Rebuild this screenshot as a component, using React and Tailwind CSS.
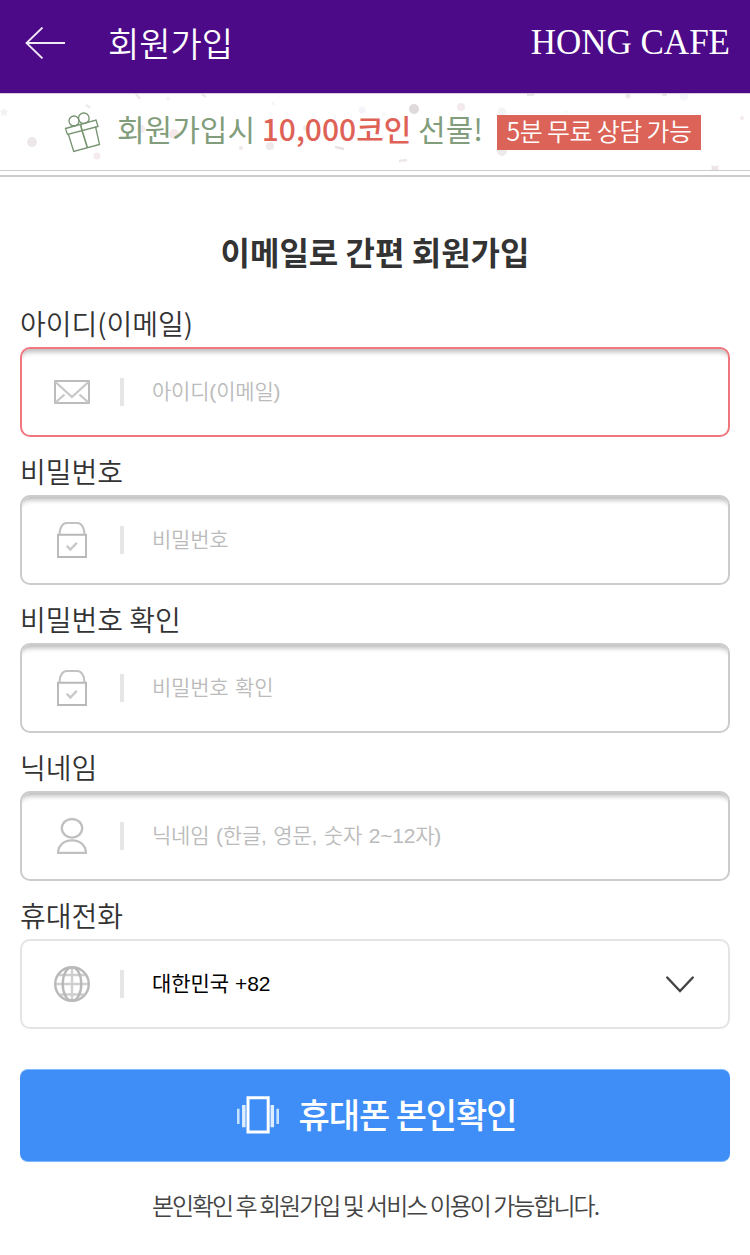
import { useState } from 'react'

const confetti = [
  { x: 32, y: 142, r: 5, fill: '#eee7e8' },
  { x: 97, y: 156, r: 3.5, fill: '#f5ebec' },
  { x: 168, y: 98.5, r: 2, fill: '#f5f3f6' },
  { x: 141, y: 129, r: 4, fill: '#f4ebed' },
  { x: 174, y: 134, r: 5, fill: '#f4e8ea' },
  { x: 241, y: 148, r: 2, fill: '#eee7e9' },
  { x: 270, y: 146, r: 4, fill: '#efe9ea' },
  { x: 362, y: 110, r: 3.5, fill: '#f4f4fa' },
  { x: 306, y: 128, r: 3, fill: '#f0ecee' },
  { x: 414, y: 109, r: 5, fill: '#dfd9db' },
  { x: 461, y: 107, r: 4, fill: '#f3eaed' },
  { x: 384, y: 114, r: 2, fill: '#f8f7f9' },
  { x: 502, y: 112, r: 4.5, fill: '#f4f4f7' },
  { x: 502, y: 151, r: 5, fill: '#eeeaec' },
  { x: 566, y: 112, r: 1.5, fill: '#f5f5fa' },
  { x: 628, y: 96, r: 2.5, fill: '#efe7e7' },
  { x: 684, y: 96, r: 4.5, fill: '#f5f6fb' },
  { x: 742, y: 118, r: 2, fill: '#f3ebed' },
]

function Confetti() {
  return (
    <svg className="absolute inset-0" width="750" height="76" viewBox="0 94 750 76">
      {confetti.map((c) => (
        <circle key={`${c.x}-${c.y}`} cx={c.x} cy={c.y} r={c.r} fill={c.fill} />
      ))}
      <path d="M4 107.500l1.300 3 3.200.300-2.400 2.100.700 3.200-2.800-1.700-2.800 1.700.700-3.200-2.400-2.100 3.200-.300z" fill="#f3f1f3" />
      <path d="M711 165l4 1.500 4-1.500-1 3 1 3h-8l1-3z" fill="#eee4e6" />
      <g fill="none" strokeWidth="2.500">
        <path d="M136 94l4 5M86 105l4 2.500M202 94l4 3" stroke="#f0e8ea" />
        <path d="M272 102l2 3" stroke="#f4f1f3" strokeWidth="1.500" />
        <path d="M335 147l9 2" stroke="#e9e1e3" />
        <path d="M399 161l8-1" stroke="#ede6e9" />
        <path d="M527 94.500h7M662 94.500h5" stroke="#e8e2e4" />
      </g>
    </svg>
  )
}

function GiftIcon() {
  return (
    <svg width="38" height="42" viewBox="0 0 38 42" fill="none" stroke="#75936f" strokeWidth="1.300">
      <path d="M1.500 16.500L32 8l2 6.500L3.500 22.500z" />
      <path d="M4.500 22.500l5.200 17L35.500 32.500l-4-18" />
      <path d="M16.500 12.500l1.700 6.500 5.300 17" strokeWidth="1.600" />
      <circle cx="10" cy="9" r="5" />
      <circle cx="19.800" cy="6.300" r="5.300" />
    </svg>
  )
}

function MailIcon() {
  return (
    <svg width="36" height="24" viewBox="0 0 36 24" fill="none" stroke="#bcbcbc" strokeWidth="2">
      <path d="M1 1h34v22H1z" />
      <path d="M1 1.500l16.900 15.500L35 1.500M1 23l9.500-8.500M35 23l-9.500-8.500" strokeWidth="2.300" stroke="#c8c8c8" />
    </svg>
  )
}

function LockIcon() {
  return (
    <svg width="30" height="36" viewBox="0 0 30 36" fill="none" stroke="#b8b8b8" strokeWidth="1.900">
      <path d="M1 12.800h28v22.200H1z" />
      <path d="M2.500 12.500C2.500 5 6 1 10 1h10c4 0 7.500 4 7.500 11.500" stroke="#c2c2c2" strokeWidth="2.200" />
      <path d="M9.800 23.800l3.500 3.700 6.500-6.700" stroke="#c8c8c8" strokeWidth="2.400" />
    </svg>
  )
}

function UserIcon() {
  return (
    <svg width="30" height="36" viewBox="0 0 30 36" fill="none" stroke="#c0c0c0" strokeWidth="2.300">
      <ellipse cx="15" cy="10.300" rx="10.200" ry="9.300" />
      <path d="M1 35C1.200 27.500 6.500 22.400 15 22.400S28.800 27.500 29 35z" />
    </svg>
  )
}

function GlobeIcon() {
  return (
    <svg width="36" height="36" viewBox="0 0 36 36" fill="none" stroke="#b9b9b9" strokeWidth="2.400">
      <path d="M18 1v34M1 18h34M4.500 9h27M6.500 28.500h23" strokeWidth="2.400" stroke="#cfcfcf" />
      <circle cx="18" cy="18" r="16.800" />
      <ellipse cx="18" cy="18" rx="9.300" ry="16.800" />
    </svg>
  )
}

function VibrateIcon() {
  return (
    <svg width="42" height="38" viewBox="0 0 42 38" fill="none" stroke="#fff">
      <path d="M11 1.700h20.200v34.400H11z" strokeWidth="3" />
      <path d="M6.800 9v22.200M35.300 9v22.200" strokeWidth="3.500" stroke="#dceeff" />
      <path d="M1.300 12.700v15.300M40.700 12.700v15.300" strokeWidth="2.600" stroke="#c5e3ff" />
    </svg>
  )
}

const fields = [
  { name: 'email', label: '아이디(이메일)', placeholder: '아이디(이메일)', type: 'text', icon: MailIcon, invalid: true },
  { name: 'password', label: '비밀번호', placeholder: '비밀번호', type: 'password', icon: LockIcon },
  { name: 'passwordConfirm', label: '비밀번호 확인', placeholder: '비밀번호 확인', type: 'password', icon: LockIcon },
  { name: 'nickname', label: '닉네임', placeholder: '닉네임 (한글, 영문, 숫자 2~12자)', type: 'text', icon: UserIcon },
]

function Label({ htmlFor, children }) {
  return (
    <label htmlFor={htmlFor} className="block h-[58px] pt-3 text-[28px] leading-[44px] font-[350] text-[#333]">
      {children}
    </label>
  )
}

function IconCell({ icon: Icon }) {
  return (
    <>
      <span className="flex w-[98px] shrink-0 justify-center pl-0.5">
        <Icon />
      </span>
      <span className="mr-7 h-7 w-1 shrink-0 bg-[#e6e6e6]" />
    </>
  )
}

function Field({ field, value, onChange }) {
  return (
    <div>
      <Label htmlFor={field.name}>{field.label}</Label>
      <div
        className={`flex h-[90px] items-center rounded-[10px] border-2 bg-white shadow-[inset_0_8px_5px_-5px_#bbb] ${
          field.invalid ? 'border-[#f0777d]' : 'border-[#ccc]'
        }`}
      >
        <IconCell icon={field.icon} />
        <input
          id={field.name}
          type={field.type}
          value={value}
          onChange={(e) => onChange(field.name, e.target.value)}
          placeholder={field.placeholder}
          className="mb-px h-[60px] min-w-0 flex-1 bg-transparent font-['Liberation_Sans','Noto_Sans_CJK_KR',sans-serif] text-[21px] font-[350] tracking-[-0.2px] outline-none [word-spacing:1px] placeholder:text-[#bbb]"
        />
      </div>
    </div>
  )
}

function App() {
  const [form, setForm] = useState({ email: '', password: '', passwordConfirm: '', nickname: '' })

  const handleChange = (name, value) => setForm({ ...form, [name]: value })

  return (
    <div className="min-h-[1255px] w-[750px] overflow-hidden bg-white font-['Noto_Sans_CJK_KR',sans-serif] text-[#333]">
      <header className="flex h-[93px] items-center bg-[#4c0a89] pr-5 pl-[25px] text-white">
        <button type="button" aria-label="뒤로">
          <svg width="40" height="32" viewBox="0 0 40 32" fill="none" stroke="#f0eaf6" strokeWidth="1.800" className="-mt-2">
            <path d="M17.500.500L1.500 16l16 15.500M1.500 16H40" />
          </svg>
        </button>
        <h1 className="mb-2 ml-[43px] text-[34px] leading-[50px] font-[350]">회원가입</h1>
        <span className="mb-2 ml-auto font-['Liberation_Serif',serif] text-[35px] leading-10">HONG CAFE</span>
      </header>

      <div className="relative flex h-[78px] border-t border-b border-t-[#d6cbdc] border-b-[#ccc] pl-16">
        <Confetti />
        <span className="relative mt-[18px]">
          <GiftIcon />
        </span>
        <p className="relative mt-[9px] ml-[15px] text-[30px] leading-[50px] whitespace-nowrap text-[#829d7b]">
          회원가입시 <strong className="font-medium text-[#df6257]">10,000코인</strong> 선물!
        </p>
        <span className="relative mt-[21px] ml-[14px] h-[35px] w-[204px] bg-[#dc6358] text-center text-[25px] leading-[31px] font-[350] tracking-[-0.6px] whitespace-nowrap text-white">
          5분 무료 상담 가능
        </span>
      </div>
      <div className="mt-1 h-0.5 bg-[#ccc]" />

      <main className="px-5">
        <h2 className="mt-[47px] h-[65px] text-center text-[32px] leading-[54px] font-bold">이메일로 간편 회원가입</h2>
        {fields.map((field) => (
          <Field key={field.name} field={field} value={form[field.name]} onChange={handleChange} />
        ))}

        <Label htmlFor="country">휴대전화</Label>
        <button
          id="country"
          type="button"
          className="flex h-[90px] w-full items-center rounded-[10px] border-2 border-[#e4e4e4] pr-[34px] text-left"
        >
          <IconCell icon={GlobeIcon} />
          <span className="mb-px flex-1 font-['Liberation_Sans','Noto_Sans_CJK_KR',sans-serif] text-[21px] tracking-[-0.1px] text-black [word-spacing:0.5px]">
            대한민국 +82
          </span>
          <svg width="28" height="17" viewBox="0 0 28 17" fill="none" stroke="#444" strokeWidth="2.400" strokeLinecap="round">
            <path d="M1.200 1.500L14 15 26.800 1.500" />
          </svg>
        </button>

        <button
          type="button"
          className="mt-10 flex h-[93px] w-full items-center justify-center rounded-[8px] border-y border-[#7dbaff] bg-[#3f8df7] pb-0.5 pl-[3px] text-white"
        >
          <VibrateIcon />
          <span className="mb-0.5 ml-5 text-[34px] leading-[50px] font-medium tracking-[-1.100px]">휴대폰 본인확인</span>
        </button>

        <p className="mt-[25px] text-center text-[24px] leading-9 font-[350] tracking-[-2px] text-[#444]">
          본인확인 후 회원가입 및 서비스 이용이 가능합니다.
        </p>
      </main>
    </div>
  )
}

export default App
